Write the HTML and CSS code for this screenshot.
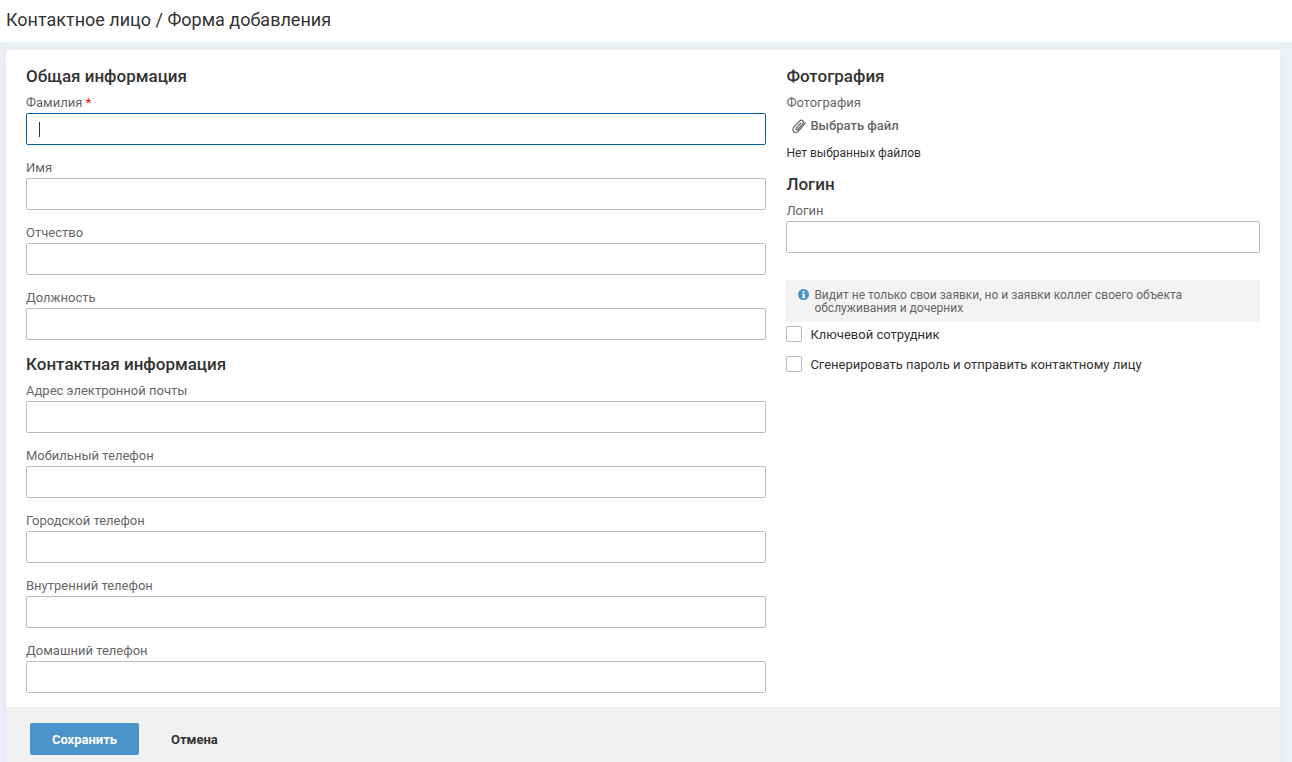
FILE: index.html
```html
<!DOCTYPE html>
<html lang="ru">
<head>
<meta charset="utf-8">
<title>Контактное лицо / Форма добавления</title>
<link rel="stylesheet" href="styles.css">
</head>
<body>
<header class="page-header"><h1 class="page-title">Контактное лицо / Форма добавления</h1></header>
<main class="page-main">
<form class="card">
  <div class="columns">
    <div class="column">
      <section class="section">
        <h2 class="section-title">Общая информация</h2>
        <div class="field"><label class="label" for="surname">Фамилия <span class="required">*</span></label><input class="input" id="surname" type="text" placeholder=" " required autofocus></div>
        <div class="field"><label class="label" for="name">Имя</label><input class="input" id="name" type="text" placeholder=" "></div>
        <div class="field"><label class="label" for="patronymic">Отчество</label><input class="input" id="patronymic" type="text" placeholder=" "></div>
        <div class="field"><label class="label" for="position">Должность</label><input class="input" id="position" type="text" placeholder=" "></div>
      </section>
      <section class="section">
        <h2 class="section-title">Контактная информация</h2>
        <div class="field"><label class="label" for="email">Адрес электронной почты</label><input class="input" id="email" type="text" placeholder=" "></div>
        <div class="field"><label class="label" for="mobile">Мобильный телефон</label><input class="input" id="mobile" type="text" placeholder=" "></div>
        <div class="field"><label class="label" for="city">Городской телефон</label><input class="input" id="city" type="text" placeholder=" "></div>
        <div class="field"><label class="label" for="internal">Внутренний телефон</label><input class="input" id="internal" type="text" placeholder=" "></div>
        <div class="field"><label class="label" for="home">Домашний телефон</label><input class="input" id="home" type="text" placeholder=" "></div>
      </section>
    </div>
    <div class="column">
      <section class="section">
        <h2 class="section-title">Фотография</h2>
        <div class="upload">
          <span class="label" id="photo-label">Фотография</span>
          <button class="file-button" type="button" aria-describedby="photo-label">
            <svg class="clip-icon" viewBox="0 0 15 16" aria-hidden="true"><path d="M9.800 5.200 5.400 10.200c-.5.6-.4 1.200 0 1.500.4.400 1 .4 1.500-.2l4.700-5.400c1.100-1.300 1.100-2.600.2-3.400-1-.8-2.300-.6-3.400.6L3 8.900c-1.500 1.700-1.500 3.800-.2 4.900 1.300 1.200 3.300.9 4.700-.7l5.900-6.700c.5-.6.7-1.200.7-1.800"/></svg>
            Выбрать файл
          </button>
          <p class="file-status">Нет выбранных файлов</p>
        </div>
      </section>
      <section class="section">
        <h2 class="section-title">Логин</h2>
        <div class="field"><label class="label" for="login">Логин</label><input class="input" id="login" type="text" placeholder=" "></div>
      </section>
      <div class="options">
        <div class="hint">
          <svg class="info-icon" viewBox="0 0 12 12" aria-hidden="true"><circle class="info-disc" cx="5.500" cy="5.500" r="5.500"/><path class="info-mark" d="M4.600 2h2v1.600h-2zM4 4.500h2.600V8h.7v1H4V8h.7V5.500H4z"/></svg>
          <p class="hint-text">Видит не только свои заявки, но и заявки коллег своего объекта обслуживания и дочерних</p>
        </div>
        <label class="check"><input class="checkbox" type="checkbox">Ключевой сотрудник</label>
        <label class="check"><input class="checkbox" type="checkbox">Сгенерировать пароль и отправить контактному лицу</label>
      </div>
    </div>
  </div>
  <footer class="actions">
    <button class="button button-primary" type="submit">Сохранить</button>
    <button class="button" type="reset">Отмена</button>
  </footer>
</form>
</main>
</body>
</html>
```
FILE: styles.css
```css
* { box-sizing: border-box; }
body {
  margin: 0;
  min-height: 100vh;
  background: #edf1f6;
  color: #333;
  font: 13px/18px Roboto, "Noto Sans", sans-serif;
}
h1, h2, p { margin: 0; }
button, input { font: inherit; color: inherit; }
.page-header { background: #fff; padding: 8px 6px 10px; }
.page-title { font-size: 18px; line-height: 24px; font-weight: 400; }
.page-main { padding: 8px 12px 0 6px; }
.card {
  background: #fff;
  border-radius: 3px 3px 0 0;
  box-shadow: 0 4px 12px rgba(60, 90, 130, 0.06);
}
.columns {
  display: grid;
  grid-template-columns: 60% 1fr;
  column-gap: 20px;
  padding: 16px 20px 14px;
}
.column { display: flex; flex-direction: column; gap: 14px; min-width: 0; }
.section { display: flex; flex-direction: column; gap: 14px; }
.section-title { font-size: 17px; line-height: 20px; font-weight: 500; margin-bottom: -6px; }
.field { display: flex; flex-direction: column; gap: 1px; }
.label { color: #666; }
.required { color: #f00; }
.input {
  width: 100%;
  height: 32px;
  padding: 0 12px;
  border: 1px solid #bbb;
  border-radius: 2px;
  background: #fff;
}
.input:focus { outline: 0; border-color: #0064a8; }
/* Steady caret while the focused field is empty */
.input:focus:placeholder-shown {
  caret-color: transparent;
  background: #fff linear-gradient(#333, #333) 12px center / 1px 15px no-repeat;
}
.upload { display: flex; flex-direction: column; align-items: flex-start; margin-bottom: -2px; }
.file-button {
  display: flex;
  align-items: center;
  gap: 4px;
  margin: 0 0 4px;
  padding: 5px;
  border: 0;
  background: none;
  color: #666;
  font-weight: 500;
}
.clip-icon { width: 15px; height: 16px; fill: none; stroke: #666; stroke-width: 1.2; stroke-linecap: round; }
.file-status { font-size: 12px; }
.options { display: flex; flex-direction: column; gap: 12px; margin-top: 13px; }
.hint {
  display: flex;
  gap: 4px;
  margin-bottom: -8px;
  padding: 9px 12px 7px;
  background: #f3f3f3;
  color: #666;
}
.info-icon { flex: none; width: 12px; height: 12px; }
.info-disc { fill: #4b93cb; }
.info-mark { fill: #fff; }
.hint-text { max-width: 380px; font-size: 12px; line-height: 13px; }
.check { display: flex; align-items: flex-start; gap: 8px; }
.checkbox {
  appearance: none;
  width: 16px;
  height: 16px;
  margin: 0;
  border: 1px solid #bbb;
  border-radius: 2px;
  background: #fff;
}
.checkbox:checked { background: #4b93cb; }
.actions { display: flex; gap: 12px; padding: 16px 24px; background: #f1f1f1; }
.button {
  padding: 8px 20px 6px;
  border: 0;
  border-radius: 2px;
  background: none;
  font-weight: 700;
}
.button-primary { min-width: 109px; background: #4b93cb; color: #fff; }
```
